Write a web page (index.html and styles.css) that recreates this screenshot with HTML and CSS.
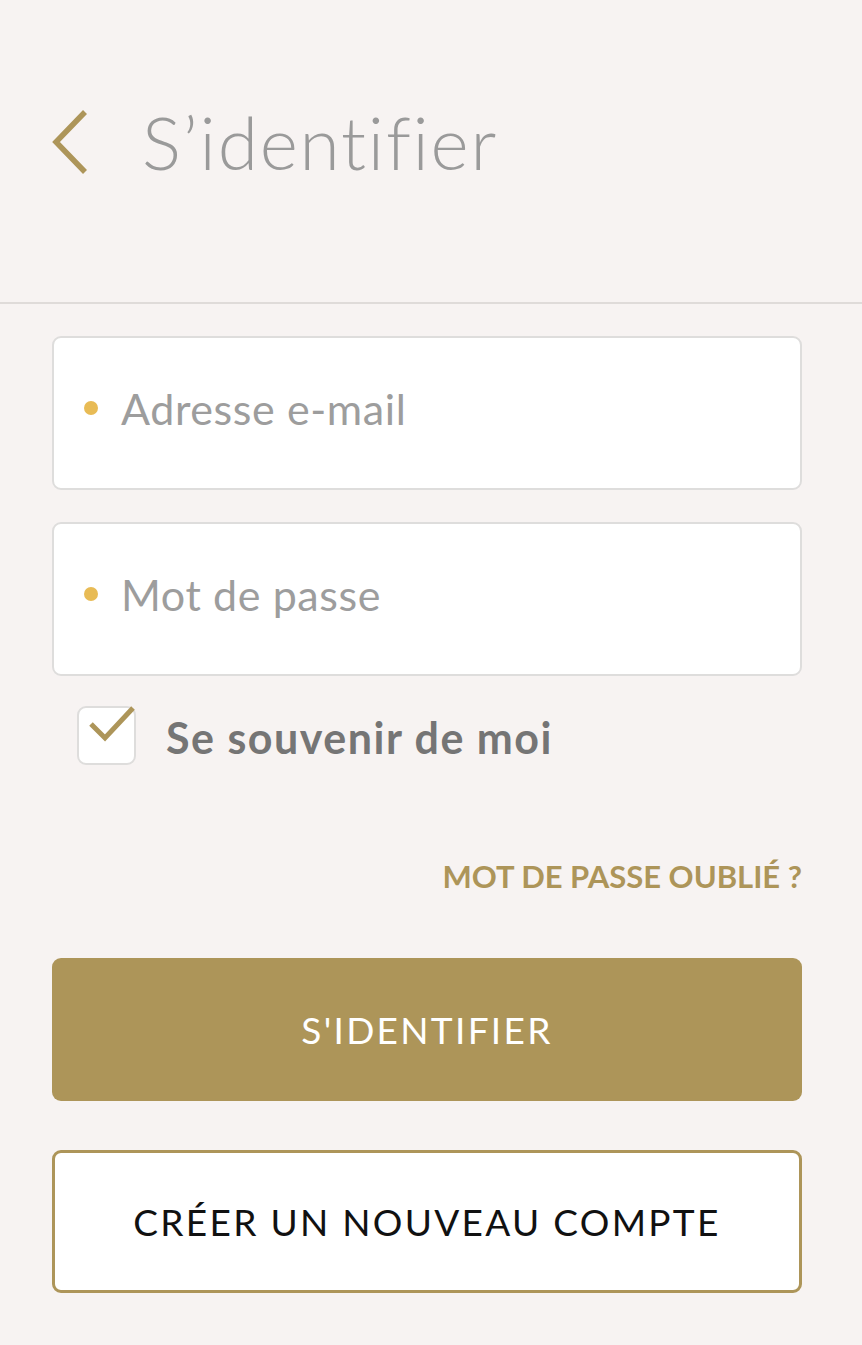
FILE: index.html
```html
<!DOCTYPE html>
<html lang="fr">
<head>
<meta charset="utf-8">
<title>S'identifier</title>
<link rel="stylesheet" href="styles.css">
</head>
<body>
<header class="topbar">
  <button class="back" aria-label="Retour">
    <svg width="40" height="66" viewBox="0 0 40 66"><polyline points="35,3 6,33 35,63" fill="none" stroke="#ad9559" stroke-width="5.5"/></svg>
  </button>
  <h1 class="title">S’identifier</h1>
</header>
<main class="form">
  <label class="field">
    <span class="dot"></span>
    <span class="placeholder">Adresse e-mail</span>
  </label>
  <label class="field">
    <span class="dot"></span>
    <span class="placeholder">Mot de passe</span>
  </label>
  <div class="remember">
    <span class="checkbox">
      <svg width="58" height="70" viewBox="0 0 58 70"><polyline points="14,30 28,44 56,14" fill="none" stroke="#ad9559" stroke-width="5"/></svg>
    </span>
    <span class="remember-label">Se souvenir de moi</span>
  </div>
  <div class="forgot-row"><a class="forgot">MOT DE PASSE OUBLIÉ ?</a></div>
  <button class="btn btn-primary">S'IDENTIFIER</button>
  <button class="btn btn-secondary">CRÉER UN NOUVEAU COMPTE</button>
</main>
</body>
</html>
```
FILE: styles.css
```css
html, body {
  margin: 0;
  padding: 0;
}
body {
  background: #f7f3f2;
  font-family: Lato, "Noto Sans", sans-serif;
  width: 862px;
  height: 1345px;
  overflow: hidden;
}
.topbar {
  box-sizing: border-box;
  height: 304px;
  border-bottom: 2px solid #dfdbd9;
  display: flex;
  align-items: center;
  padding-left: 50px;
  padding-bottom: 18px;
}
.back {
  background: none;
  border: 0;
  padding: 0;
  width: 40px;
  height: 66px;
  display: flex;
  margin-top: 0;
}
.title {
  margin: 0 0 0 52px;
  font-weight: 300;
  font-size: 73px;
  color: #9a9a9a;
  letter-spacing: 1.8px;
}
.form {
  padding: 32px 60px 0 52px;
  display: flex;
  flex-direction: column;
}
.field {
  height: 154px;
  box-sizing: border-box;
  background: #fff;
  border: 2px solid #dedddc;
  border-radius: 9px;
  display: flex;
  align-items: center;
  padding-left: 30px;
  margin-bottom: 32px;
}
.field:nth-of-type(2) {
  margin-bottom: 30px;
}
.dot {
  width: 14px;
  height: 14px;
  border-radius: 50%;
  background: #e8bb55;
  margin-right: 23px;
  margin-top: -10px;
}
.placeholder {
  font-size: 43px;
  color: #9d9d9d;
  letter-spacing: 0.6px;
  margin-top: -10px;
}
.remember {
  display: flex;
  align-items: center;
  padding-left: 25px;
}
.checkbox {
  position: relative;
  width: 59px;
  height: 59px;
  box-sizing: border-box;
  background: #fff;
  border: 2px solid #dedddc;
  border-radius: 9px;
}
.checkbox svg {
  position: absolute;
  left: -2px;
  top: -14px;
}
.remember-label {
  margin-left: 30px;
  font-size: 43px;
  font-weight: 700;
  color: #757575;
  letter-spacing: 1.5px;
  margin-top: 4px;
}
.forgot-row {
  display: flex;
  justify-content: flex-end;
  margin-top: 92px;
}
.forgot {
  font-size: 31px;
  font-weight: 700;
  color: #ad9559;
}
.btn {
  height: 143px;
  border-radius: 9px;
  font-family: Lato, "Noto Sans", sans-serif;
  font-size: 37px;
  letter-spacing: 2.3px;
  width: 100%;
  flex-shrink: 0;
}
.btn-primary {
  margin-top: 63px;
  background: #ad9559;
  border: 0;
  color: #fff;
}
.btn-secondary {
  margin-top: 49px;
  background: #fff;
  border: 3px solid #ad9559;
  color: #111;
}
```
